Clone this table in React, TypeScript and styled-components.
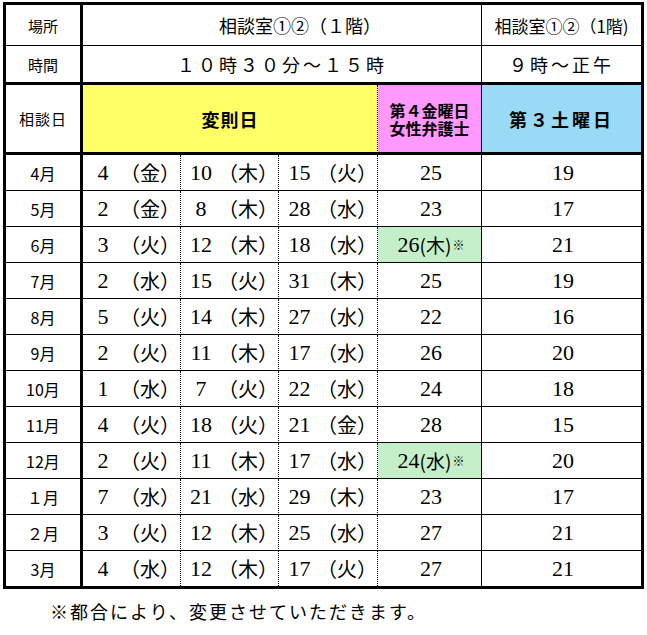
import React from 'react';
import styled, { createGlobalStyle } from 'styled-components';

type DateItem = [string, string];
type Row = {
  month: string;
  dates: DateItem[];
  lady: string;
  ladyDay?: string;
  sat: string;
};

const rows: Row[] = [
  { month: '4月', dates: [['4', '金'], ['10', '木'], ['15', '火']], lady: '25', sat: '19' },
  { month: '5月', dates: [['2', '金'], ['8', '木'], ['28', '水']], lady: '23', sat: '17' },
  { month: '6月', dates: [['3', '火'], ['12', '木'], ['18', '水']], lady: '26', ladyDay: '木', sat: '21' },
  { month: '7月', dates: [['2', '水'], ['15', '火'], ['31', '木']], lady: '25', sat: '19' },
  { month: '8月', dates: [['5', '火'], ['14', '木'], ['27', '水']], lady: '22', sat: '16' },
  { month: '9月', dates: [['2', '火'], ['11', '木'], ['17', '水']], lady: '26', sat: '20' },
  { month: '10月', dates: [['1', '水'], ['7', '火'], ['22', '水']], lady: '24', sat: '18' },
  { month: '11月', dates: [['4', '火'], ['18', '火'], ['21', '金']], lady: '28', sat: '15' },
  { month: '12月', dates: [['2', '火'], ['11', '木'], ['17', '水']], lady: '24', ladyDay: '水', sat: '20' },
  { month: '１月', dates: [['7', '水'], ['21', '水'], ['29', '木']], lady: '23', sat: '17' },
  { month: '２月', dates: [['3', '火'], ['12', '木'], ['25', '水']], lady: '27', sat: '21' },
  { month: '3月', dates: [['4', '水'], ['12', '木'], ['17', '火']], lady: '27', sat: '21' },
];

type RightLine = 'solid' | 'dotted' | 'thick' | 'none';
type BottomLine = 'thin' | 'thick' | 'none';

const rightCss = (r: RightLine) =>
  r === 'none'
    ? 'none'
    : r === 'thick'
    ? '3px solid #000'
    : r === 'dotted'
    ? '1px dotted #000'
    : '1px solid #000';

const bottomCss = (b: BottomLine) =>
  b === 'none' ? 'none' : b === 'thick' ? '3px solid #000' : '1px solid #000';

export default function App() {
  return (
    <>
      <GlobalStyle />
      <Div_Page>
        <Div_Table>
          {/* header row 1 */}
          <Div_Cell $right="thick">
            <Span_Label>場所</Span_Label>
          </Div_Cell>
          <Div_Cell $span={4} $right="solid">
            <Span_Room>相談室①②（１階）</Span_Room>
          </Div_Cell>
          <Div_Cell $right="none">
            <Span_RoomSmall>相談室①②（1階)</Span_RoomSmall>
          </Div_Cell>

          {/* header row 2 */}
          <Div_Cell $right="thick" $bottom="thick">
            <Span_Label>時間</Span_Label>
          </Div_Cell>
          <Div_Cell $span={4} $right="solid" $bottom="thick">
            <Span_Time>１０時３０分～１５時</Span_Time>
          </Div_Cell>
          <Div_Cell $right="none" $bottom="thick">
            <Span_Time>９時～正午</Span_Time>
          </Div_Cell>

          {/* header row 3 */}
          <Div_Cell $right="thick" $bottom="thick">
            <Span_Label $spacing={1}>相談日</Span_Label>
          </Div_Cell>
          <Div_Cell $span={3} $right="dotted" $bottom="thick" $bg="#ffff66">
            <Span_Bold>変則日</Span_Bold>
          </Div_Cell>
          <Div_Cell $right="solid" $bottom="thick" $bg="#ff99ff">
            <Div_TwoLine>
              <Div_Line>第４金曜日</Div_Line>
              <Div_Line>女性弁護士</Div_Line>
            </Div_TwoLine>
          </Div_Cell>
          <Div_Cell $right="none" $bottom="thick" $bg="#99daf6">
            <Span_Bold $spacing={3}>第３土曜日</Span_Bold>
          </Div_Cell>

          {rows.map((row, i) => {
            const last = i === rows.length - 1;
            const bottom: BottomLine = last ? 'none' : 'thin';
            return (
              <React.Fragment key={row.month}>
                <Div_Cell $right="thick" $bottom={bottom}>
                  <Span_Month>{row.month}</Span_Month>
                </Div_Cell>
                {row.dates.map(([num, day]) => (
                  <Div_DateCell key={num + day} $bottom={bottom}>
                    <Span_Num>{num}</Span_Num>
                    <Span_Day>（{day}）</Span_Day>
                  </Div_DateCell>
                ))}
                <Div_Cell
                  $right="solid"
                  $bottom={bottom}
                  $bg={row.ladyDay ? '#c4efc8' : undefined}
                >
                  <Span_Num>{row.lady}</Span_Num>
                  {row.ladyDay && (
                    <>
                      <Span_HalfDay>({row.ladyDay})</Span_HalfDay>
                      <Span_Mark>※</Span_Mark>
                    </>
                  )}
                </Div_Cell>
                <Div_Cell $right="none" $bottom={bottom}>
                  <Span_Num>{row.sat}</Span_Num>
                </Div_Cell>
              </React.Fragment>
            );
          })}
        </Div_Table>
        <P_Note>※都合により、変更させていただきます。</P_Note>
      </Div_Page>
    </>
  );
}

const GlobalStyle = createGlobalStyle`
  *, *::before, *::after { box-sizing: border-box; }
  html, body { margin: 0; padding: 0; background: #fff; }
  body {
    font-family: "Noto Sans CJK JP", sans-serif;
    color: #000;
  }
`;

const Div_Page = styled.div`
  padding: 2px 3px;
`;

const Div_Table = styled.div`
  display: grid;
  grid-template-columns: 77px 98px 98px 99px 104px 159px;
  grid-template-rows: 41px 39px 70px repeat(11, 36px) 35px;
  width: max-content;
  border: 3px solid #000;
`;

const Div_Cell = styled.div<{
  $right: RightLine;
  $bottom?: BottomLine;
  $span?: number;
  $bg?: string;
}>`
  display: flex;
  align-items: center;
  justify-content: center;
  grid-column: span ${(p) => p.$span ?? 1};
  border-right: ${(p) => rightCss(p.$right)};
  border-bottom: ${(p) => bottomCss(p.$bottom ?? 'thin')};
  background: ${(p) => p.$bg ?? '#fff'};
  line-height: 1;
  white-space: nowrap;
`;

const Div_DateCell = styled.div<{ $bottom: BottomLine }>`
  display: grid;
  grid-template-columns: 1fr 60px;
  align-items: center;
  border-right: 1px dotted #000;
  border-bottom: ${(p) => bottomCss(p.$bottom)};
  line-height: 1;
  white-space: nowrap;
`;

const Span_Label = styled.span<{ $spacing?: number }>`
  font-size: 15px;
  letter-spacing: ${(p) => p.$spacing ?? 0}px;
`;

const Span_Room = styled.span`
  font-size: 18px;
  padding-left: 36px;
`;

const Span_RoomSmall = styled.span`
  font-size: 17px;
`;

const Span_Time = styled.span`
  font-size: 18px;
  letter-spacing: 3px;
`;

const Span_Bold = styled.span<{ $spacing?: number }>`
  font-size: 18px;
  font-weight: 700;
  letter-spacing: ${(p) => p.$spacing ?? 1}px;
`;

const Div_TwoLine = styled.div`
  display: flex;
  flex-direction: column;
  align-items: center;
  gap: 2px;
  font-size: 16px;
  font-weight: 700;
`;

const Div_Line = styled.div`
  height: 16px;
  line-height: 16px;
`;

const Span_Month = styled.span`
  font-size: 16px;
`;

const Span_Num = styled.span`
  font-family: "Liberation Serif", "Noto Sans CJK JP", serif;
  font-size: 22px;
  text-align: center;
  padding-left: 3px;
`;

const Span_Day = styled.span`
  font-size: 20px;
  text-align: left;
`;

const Span_HalfDay = styled.span`
  font-size: 19px;
`;

const Span_Mark = styled.span`
  font-size: 12px;
  margin-left: 1px;
`;

const P_Note = styled.p`
  margin: 13px 0 0 47px;
  font-size: 18px;
  line-height: 1;
  letter-spacing: 2px;
`;
